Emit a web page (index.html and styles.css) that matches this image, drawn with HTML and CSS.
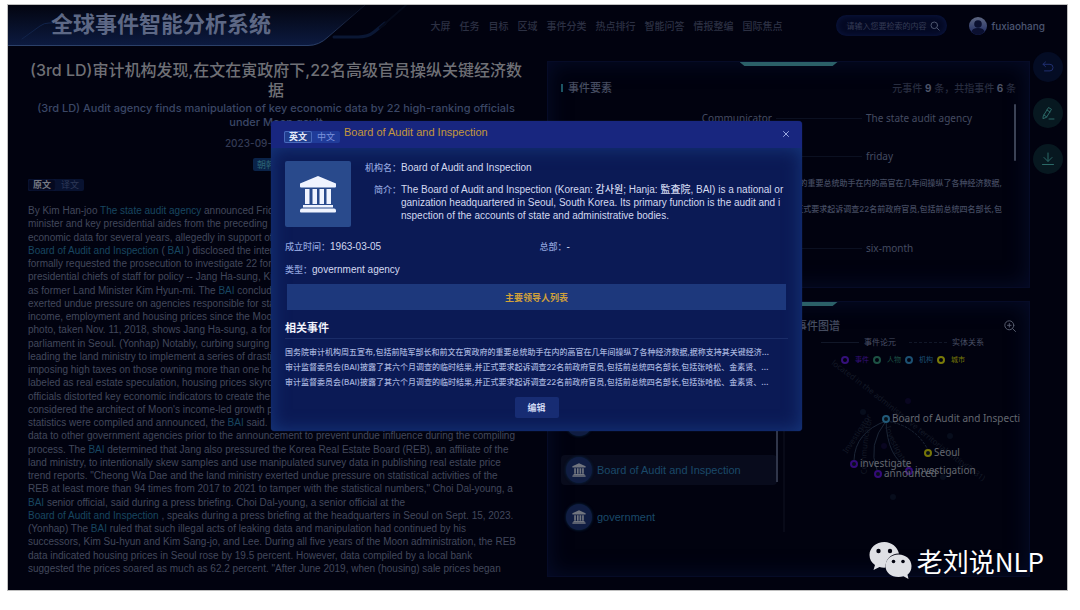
FILE: index.html
```html
<!DOCTYPE html>
<html lang="zh-CN">
<head>
<meta charset="utf-8">
<title>全球事件智能分析系统</title>
<link rel="stylesheet" href="styles.css">
</head>
<body>
<svg class="defs" width="0" height="0" aria-hidden="true">
  <symbol id="bank" viewBox="0 0 38 38">
    <path d="M19 1 37 8.500v3q0 1-1 1H2q-1 0-1-1v-3ZM6 14h4.500v15H6Zm7.500 0H18v15h-4.500Zm7 0H25v15h-4.500Zm7 0H32v15h-4.500ZM4 30h30v2.500H4ZM3 33.500h32q2 0 2 2v1q0 1-1 1H2q-1 0-1-1v-1q0-2 2-2Z"/>
  </symbol>
</svg>
<div class="screen">
  <header class="topbar">
    <svg class="banner" width="400" height="42" viewBox="0 0 400 42" aria-hidden="true">
      <defs>
        <linearGradient id="bannerFill" x1="0" y1="0" x2="0" y2="1">
          <stop offset="0" stop-color="#030510"/><stop offset="1" stop-color="#0c1a40"/>
        </linearGradient>
        <linearGradient id="bannerEdge" x1="0" y1="0" x2="0" y2="1">
          <stop offset="0" stop-color="#0a1024"/><stop offset="1" stop-color="#2b4069"/>
        </linearGradient>
      </defs>
      <path d="M0 0H356L320 32Q311 40.500 300 40.500H0Z" fill="url(#bannerFill)"/>
      <path d="M357 0 320 32Q311 40.500 300 40.500H0" fill="none" stroke="url(#bannerEdge)"/>
      <path d="M326 32H350Q360 32 366 27L377 18" fill="none" stroke="#0a1734" stroke-width="3"/>
      <path d="M372 23 398 0" fill="none" stroke="#050a1a" stroke-width="2"/>
      <path d="M14 34 32 21Q36 18 41 18H62" fill="none" stroke="#11234a" stroke-width="1"/>
    </svg>
    <h1 class="brand">全球事件智能分析系统</h1>
    <nav class="nav">
      <a href="#">大屏</a><a href="#">任务</a><a href="#">目标</a><a href="#">区域</a><a href="#">事件分类</a><a href="#">热点排行</a><a href="#">智能问答</a><a href="#">情报整编</a><a href="#">国际焦点</a>
    </nav>
    <form class="search">
      <input type="text" aria-label="搜索" placeholder="请输入您要检索的内容">
      <button type="button" aria-label="检索"><svg width="10" height="10" viewBox="0 0 10 10"><circle cx="4.300" cy="4.300" r="3.300"/><path d="m6.800 6.800 2.400 2.400"/></svg></button>
    </form>
    <div class="user">
      <svg width="18" height="18" viewBox="0 0 18 18" aria-hidden="true"><defs><linearGradient id="av" x1="0" y1="0" x2="0" y2="1"><stop offset="0" stop-color="#5d6680"/><stop offset="1" stop-color="#1c2862"/></linearGradient></defs><circle cx="9" cy="9" r="9" fill="url(#av)"/><circle cx="9" cy="7" r="3.800" fill="#0b1030"/><path d="M2.500 15Q3 11 9 11t6.500 4Q12 18 9 18t-6.500-3Z" fill="#0b1030"/></svg>
      <span>fuxiaohang</span>
    </div>
  </header>

  <main class="main">
    <article class="article">
      <h2 class="headline">(3rd LD)审计机构发现,在文在寅政府下,22名高级官员操纵关键经济数<br>据</h2>
      <p class="subhead">(3rd LD) Audit agency finds manipulation of key economic data by 22 high-ranking officials<br>under Moon gov't</p>
      <p class="date">2023-09-15 15:30:00</p>
      <div class="tags"><span class="tag">朝韩</span></div>
      <div class="switch"><button type="button" class="on">原文</button><button type="button">译文</button></div>
      <div class="story">
        <span>By Kim Han-joo <a href="#">The state audit agency</a> announced Friday</span>
        <span>minister and key presidential aides from the preceding</span>
        <span>economic data for several years, allegedly in support of</span>
        <span><a href="#">Board of Audit and Inspection</a> ( <a href="#">BAI</a> ) disclosed the interim</span>
        <span>formally requested the prosecution to investigate 22 former</span>
        <span>presidential chiefs of staff for policy -- Jang Ha-sung, Kim</span>
        <span>as former Land Minister Kim Hyun-mi. The <a href="#">BAI</a> concluded</span>
        <span>exerted undue pressure on agencies responsible for state</span>
        <span>income, employment and housing prices since the Moon</span>
        <span>photo, taken Nov. 11, 2018, shows Jang Ha-sung, a former</span>
        <span>parliament in Seoul. (Yonhap) Notably, curbing surging</span>
        <span>leading the land ministry to implement a series of drastic</span>
        <span>imposing high taxes on those owning more than one home</span>
        <span>labeled as real estate speculation, housing prices skyrocketed</span>
        <span>officials distorted key economic indicators to create the</span>
        <span>considered the architect of Moon's income-led growth policy</span>
        <span>statistics were compiled and announced, the <a href="#">BAI</a> said.</span>
        <span>data to other government agencies prior to the announcement to prevent undue influence during the compiling</span>
        <span>process. The <a href="#">BAI</a> determined that Jang also pressured the Korea Real Estate Board (REB), an affiliate of the</span>
        <span>land ministry, to intentionally skew samples and use manipulated survey data in publishing real estate price</span>
        <span>trend reports. "Cheong Wa Dae and the land ministry exerted undue pressure on statistical activities of the</span>
        <span>REB at least more than 94 times from 2017 to 2021 to tamper with the statistical numbers," Choi Dal-young, a</span>
        <span><a href="#">BAI</a> senior official, said during a press briefing. Choi Dal-young, a senior official at the</span>
        <span><a href="#">Board of Audit and Inspection</a> , speaks during a press briefing at the headquarters in Seoul on Sept. 15, 2023.</span>
        <span>(Yonhap) The <a href="#">BAI</a> ruled that such illegal acts of leaking data and manipulation had continued by his</span>
        <span>successors, Kim Su-hyun and Kim Sang-jo, and Lee. During all five years of the Moon administration, the REB</span>
        <span>data indicated housing prices in Seoul rose by 19.5 percent. However, data compiled by a local bank</span>
        <span>suggested the prices soared as much as 62.2 percent. "After June 2019, when (housing) sale prices began</span>
      </div>
    </article>

    <div class="side">
      <section class="panel facts">
        <div class="panel-head"><h3>事件要素</h3><p>元事件 <b>9</b> 条，共指事件 <b>6</b> 条</p></div>
        <div class="facts-body">
          <div class="fact"><span>Communicator</span><i></i><span>The state audit agency</span></div>
          <div class="fact"><span></span><i></i><span>friday</span></div>
          <p>国务院审计机构周五宣布,包括前陆军部长和前文在寅政府的重要总统助手在内的高官在几年间操纵了各种经济数据,</p>
          <p>审计监督委员会(BAI)披露了其六个月调查的临时结果,并正式要求起诉调查22名前政府官员,包括前总统四名部长,包</p>
          <div class="fact"><span></span><i></i><span>six-month</span></div>
        </div>
      </section>

      <section class="panel lower">
        <div class="entities">
          <ul>
            <li><span class="ico"><svg width="14" height="14"><use href="#bank"/></svg></span>BAI</li>
            <li class="sel"><span class="ico"><svg width="14" height="14"><use href="#bank"/></svg></span>Board of Audit and Inspection</li>
            <li><span class="ico"><svg width="14" height="14"><use href="#bank"/></svg></span>government</li>
          </ul>
        </div>
        <div class="graph">
          <div class="graph-head"><h3>事件图谱</h3>
            <button type="button" aria-label="放大"><svg width="12" height="12" viewBox="0 0 12 12"><circle cx="5.300" cy="5.300" r="4.500"/><path d="m8.500 8.500 3 3M5.300 3.500v3.600M3.500 5.300h3.600"/></svg></button>
          </div>
          <div class="edges-key"><i></i><span>事件论元</span><i></i><span>实体关系</span></div>
          <div class="nodes-key"><span class="k1">事件</span><span class="k2">人物</span><span class="k3">机构</span><span class="k4">城市</span></div>
          <svg class="net" width="220" height="190" viewBox="0 0 220 190">
            <g fill="none" stroke="#1b2536">
              <path d="M81 51Q50 62 49 90"/><path d="M81 51Q62 75 72 100"/><path d="M81 51Q82 88 104 98"/>
              <path d="M81 51Q110 55 123 80" stroke-dasharray="2 2"/>
            </g>
            <path id="t1" d="M42 84Q56 63 74 35" fill="none"/><path id="t2" d="M62 104Q59 75 71 34" fill="none"/><path id="t3" d="M80 57Q88 82 108 108" fill="none"/><path id="t4" d="M26 -6Q64 22 112 61T216 138" fill="none"/>
            <g class="edge-label">
              <text><textPath href="#t1">Investigator</textPath></text><text><textPath href="#t2">Communicator</textPath></text><text><textPath href="#t3">Investigator</textPath></text><text><textPath href="#t4">located in the administrative territorial entity(P131)</textPath></text>
            </g>
            <g fill="#070d1c"><circle cx="58" cy="42" r="3"/><circle cx="103" cy="31" r="3" fill="#090620"/><circle cx="145" cy="66" r="3"/><circle cx="138" cy="107" r="3"/><circle cx="88" cy="127" r="3"/><circle cx="79" cy="76" r="3" fill="#090620"/></g>
            <g fill="#081018" stroke-width="2">
              <circle cx="81" cy="49" r="3" stroke="#225a7a"/><circle cx="123" cy="83" r="3" stroke="#777608"/><circle cx="49" cy="94" r="3" stroke="#340b78"/><circle cx="73" cy="104" r="3" stroke="#340b78"/><circle cx="104" cy="101" r="3" stroke="#340b78"/>
            </g>
            <g class="node-label"><text x="87" y="52">Board of Audit and Inspecti</text><text x="129" y="86">Seoul</text><text x="55" y="97">investigate</text><text x="79" y="107">announced</text><text x="110" y="104">investigation</text></g>
          </svg>
        </div>
      </section>
    </div>

    <aside class="tools">
      <button type="button" class="back" aria-label="返回"><svg width="14" height="14" viewBox="0 0 14 14"><path d="M4.500 2 2 4.300l2.500 2.300M2 4.300h7q3 0 3 3.300t-3 3.300H3.500"/></svg></button>
      <button type="button" aria-label="编辑"><svg width="14" height="14" viewBox="0 0 14 14"><path d="M2.500 9.500 7.500 1.500 10.500 3.300 5.500 11.300 2.300 12.500ZM6 4 9 6M3 9 5.800 11M8 13h5"/></svg></button>
      <button type="button" aria-label="下载"><svg width="14" height="14" viewBox="0 0 14 14"><path d="M7 1v8M3 5.500 7 9.500l4-4M1.500 12.500h11"/></svg></button>
    </aside>
  </main>

  <dialog class="modal" open aria-labelledby="modalTitle">
    <header class="modal-head">
      <div class="switch bright"><button type="button" class="on">英文</button><button type="button">中文</button></div>
      <h2 id="modalTitle">Board of Audit and Inspection</h2>
      <button type="button" class="close" aria-label="关闭"><svg width="6" height="6" viewBox="0 0 6 6"><path d="m.5.5 5 5m0-5-5 5"/></svg></button>
    </header>
    <div class="modal-body">
      <div class="profile">
        <div class="logo"><svg width="38" height="38"><use href="#bank"/></svg></div>
        <dl>
          <dt>机构名：</dt><dd>Board of Audit and Inspection</dd>
          <dt>简介：</dt><dd>The Board of Audit and Inspection (Korean: 감사원; Hanja: 監査院, BAI) is a national or<br>ganization headquartered in Seoul, South Korea. Its primary function is the audit and i<br>nspection of the accounts of state and administrative bodies.</dd>
        </dl>
      </div>
      <div class="meta">
        <p><span>成立时间：</span>1963-03-05</p><p><span>总部：</span>-</p>
        <p><span>类型：</span>government agency</p>
      </div>
      <button type="button" class="leaders">主要领导人列表</button>
      <h3>相关事件</h3>
      <ul class="events">
        <li>国务院审计机构周五宣布,包括前陆军部长和前文在寅政府的重要总统助手在内的高官在几年间操纵了各种经济数据,据称支持其关键经济…</li>
        <li>审计监督委员会(BAI)披露了其六个月调查的临时结果,并正式要求起诉调查22名前政府官员,包括前总统四名部长,包括张哈松、金素贤、…</li>
        <li>审计监督委员会(BAI)披露了其六个月调查的临时结果,并正式要求起诉调查22名前政府官员,包括前总统四名部长,包括张哈松、金素贤、…</li>
      </ul>
      <button type="button" class="edit">编辑</button>
    </div>
  </dialog>

  <div class="watermark">
    <svg width="43" height="37" viewBox="0 0 43 37" aria-hidden="true">
      <path d="M15.500 0C7 0 .5 5.700.5 13c0 4.200 2 7.700 5.500 10L4.500 28l6-3q2.500.8 6 .6A13 13 0 0 1 30 11.500C28.500 5 22.500 0 15.500 0Z"/>
      <path d="M29.500 12.500C22 12.500 16.500 17.600 16.500 24S22 35 29.500 35q2.500 0 5-.7L39.500 37l-1-4.300Q42.500 29.500 42.500 24C42.500 17.600 37 12.500 29.500 12.500Z"/>
      <g fill="#02030f"><circle cx="9.500" cy="9" r="2.200"/><circle cx="21" cy="9" r="2.200"/><circle cx="24.500" cy="19.500" r="1.800"/><circle cx="34" cy="19.500" r="1.800"/></g>
    </svg>
    <span>老刘说NLP</span>
  </div>
</div>
</body>
</html>
```

FILE: styles.css
```css
*, *::before, *::after { box-sizing: border-box; }
body {
  margin: 0;
  padding: 5px 13px 20px 8px;
  background: #fff;
  font-family: Inter, "Noto Sans CJK SC", "Noto Sans CJK KR", sans-serif;
  font-size: 9px;
}
h1, h2, h3, p, ul, dl, dd { margin: 0; padding: 0; font-weight: 500; }
ul { list-style: none; }
a { color: inherit; text-decoration: none; }
button { font: inherit; color: inherit; background: none; border: 0; padding: 0; cursor: pointer; }
svg { display: block; fill: none; stroke-linecap: round; stroke-linejoin: round; }
.defs { position: absolute; }

.screen {
  position: relative;
  display: flex;
  flex-direction: column;
  min-height: calc(100vh - 25px);
  overflow: hidden;
  background: #01020f;
  box-shadow: 0 0 0 1px #8888;
}

/* Top bar */
.topbar { position: relative; display: flex; align-items: center; height: 41px; padding: 0 22px 0 43px; }
.banner { position: absolute; left: 0; top: 0; }
.brand {
  position: relative;
  flex: 1;
  color: #5d6885;
  font-size: 22px;
  line-height: 36px;
  font-weight: 700;
  padding-bottom: 4px;
  white-space: nowrap;
}
.nav { display: flex; gap: 9px; margin-right: 54px; color: #2c3043; font-size: 10px; font-weight: 500; white-space: nowrap; }
.search { display: flex; align-items: center; width: 111px; height: 21px; padding: 0 7px 0 10px; margin-right: 22px; border-radius: 11px; background: #040924; box-shadow: inset 0 0 6px #0c1844; }
.search input { flex: 1; min-width: 0; padding: 0; border: 0; background: none; font: inherit; font-size: 8px; color: #4a5270; }
.search input::placeholder { color: #353b55; }
.search svg { stroke: #4d566f; }
.user { display: flex; align-items: center; gap: 4px; color: #4c5672; font-size: 10px; font-weight: 500; }

/* Page columns */
.main {
  flex: 1;
  display: grid;
  grid-template-columns: minmax(0, 516fr) minmax(0, 483fr) 30px;
  column-gap: 3px;
  padding: 6px 4px 13px 20px;
}
.article { display: flex; flex-direction: column; margin-right: 20px; white-space: nowrap; }
.headline { margin-top: 8px; color: #6f7076; font-size: 16px; line-height: 20px; text-align: center; }
.subhead { color: #3b4766; font-size: 11px; line-height: 14px; margin-top: 1px; text-align: center; }
.date { margin-top: 8px; color: #343b55; font-size: 10px; line-height: 13px; text-align: center; }
.tags { display: flex; justify-content: center; margin-top: 8px; }
.tag { width: 46px; padding-left: 4px; line-height: 13px; border-radius: 2px; background: #0a2349; color: #2b6475; }
.switch { display: flex; align-self: flex-start; border-radius: 2px; background: #081230; color: #2e3958; line-height: 12px; }
.switch button { width: 28px; }
.switch .on { border-radius: 2px; background: #05091f; color: #767983; box-shadow: inset 0 0 2px #16295c; font-weight: 700; }
.article .switch { margin-top: 8px; }
.story {
  flex: 1;
  display: flex;
  flex-direction: column;
  justify-content: space-between;
  margin-top: 13px;
  padding-bottom: 2px;
  color: #41485c;
  font-family: "Liberation Sans", sans-serif;
  font-size: 10px;
  line-height: 13px;
}
.story a { color: #184660; }

.side { display: flex; flex-direction: column; gap: 13px; padding-top: 9px; min-width: 0; }
.panel { position: relative; border: 1px solid #060b27; background: #01020f; box-shadow: inset 0 0 22px #060d2b; }
.panel::before {
  content: "";
  position: absolute;
  left: 50%;
  top: 0;
  width: 98px;
  height: 4px;
  margin-left: -49px;
  background: #2b6068;
  clip-path: polygon(0 0, 100% 0, 95% 100%, 5% 100%);
}
.panel h3 { color: #454c60; font-size: 11px; line-height: 16px; }
.facts { height: 227px; padding: 18px 13px 0; }
.panel-head { display: flex; justify-content: space-between; color: #272c3f; font-size: 10px; line-height: 16px; }
.panel-head h3 { display: flex; align-items: center; gap: 5px; }
.panel-head h3::before { content: ""; width: 2px; height: 8px; background: #1c5564; }
.panel-head b { color: #4c5368; }
.facts-body { position: relative; height: 160px; margin-top: 8px; padding: 7px 14px 0 0; color: #444b61; }
.facts-body::after { content: ""; position: absolute; right: 0; top: 0; width: 2px; height: 57px; border-radius: 1px; background: #3b4256; }
.facts-body p { display: flex; justify-content: flex-end; line-height: 12px; margin-bottom: 14px; font-size: 8px; white-space: nowrap; overflow: hidden; }
.fact { display: grid; grid-template-columns: 211px 86px 1fr; align-items: center; column-gap: 4px; height: 13px; margin-bottom: 25px; font-family: "Noto Sans", sans-serif; font-size: 10px; white-space: nowrap; }
.fact + p { margin-top: -10px; }
.facts-body p + .fact { margin-top: 26px; }
.fact span:first-child { text-align: right; }
.fact i { height: 1px; background: #0b1021; }

.lower { flex: 1; display: grid; grid-template-columns: 237px minmax(0, 1fr); }
.entities { padding: 106px 0 42px 13px; }
.entities ul { border-right: 2px solid #080a18; position: relative; }
.entities ul::after { content: ""; position: absolute; right: 5px; top: 0; width: 2px; height: 74px; background: #30364a; }
.entities li { display: flex; align-items: center; gap: 5px; height: 30px; margin: 0 6px 17px 0; padding-left: 5px; border-radius: 4px; color: #1a4969; font-family: "Liberation Sans", sans-serif; font-size: 11px; }
.entities li:last-child { margin-bottom: 0; }
.entities .sel { background: #080b1c; }
.ico { display: grid; place-items: center; width: 26px; height: 26px; border-radius: 50%; background: #101d42; box-shadow: 0 0 3px #0c2b4b; }
.ico svg { fill: #71757f; }
.graph { padding: 16px 13px 0 11px; min-width: 0; }
.graph-head { display: flex; justify-content: space-between; align-items: flex-start; }
.graph-head svg { stroke: #565c6e; margin-top: 2px; }
.edges-key { display: flex; align-items: center; justify-content: flex-end; gap: 5px; padding-right: 32px; margin-top: 2px; color: #484f64; font-size: 8px; line-height: 12px; }
.edges-key i { width: 38px; border-top: 1px solid #111728; }
.edges-key i:nth-of-type(2) { border-top-style: dashed; margin-left: 8px; }
.nodes-key { display: flex; gap: 4px; margin: 6px 0 0 45px; font-size: 7px; line-height: 12px; }
.nodes-key span { display: flex; align-items: center; gap: 6px; white-space: nowrap; }
.nodes-key span::before { content: ""; width: 8px; height: 8px; border: 2px solid; border-radius: 50%; }
.k1 { color: #35107a; }
.k2 { color: #1d5244; }
.k3 { color: #1c5072; }
.k4 { color: #797a08; }
.net { margin: 4px 0 -30px 9px; max-width: none; overflow: visible; font-family: "Noto Sans", sans-serif; }
.edge-label { fill: #131926; font-size: 8px; }
.node-label { fill: #63676f; font-size: 10px; }

.tools { display: flex; flex-direction: column; gap: 16px; }
.tools button { display: grid; place-items: center; width: 30px; height: 30px; border-radius: 50%; background: #071820; }
.tools svg { stroke: #2b6967; }
.tools .back { background: #040c24; }
.tools .back svg { stroke: #202f70; }

/* Entity card */
.modal {
  position: absolute;
  top: 116px;
  left: 0;
  right: 2px;
  width: 531px;
  max-width: 100%;
  margin: 0 auto;
  padding: 0;
  border: 0;
  border-radius: 4px;
  overflow: hidden;
  background: #0b1a55;
  color: #d3d9f0;
  box-shadow: 0 0 1px #2a4a9a;
}
.modal-head { display: flex; align-items: flex-start; gap: 4px; height: 27px; padding: 5px 13px 0; background: #18267f; color: #c4973c; }
.modal-head h2 { flex: 1; font-family: "Liberation Sans", sans-serif; font-size: 11px; line-height: 13px; }
.bright { margin-top: 5px; background: #203b99; color: #7c92dc; }
.bright .on { background: #203d8e; color: #e6eaf8; box-shadow: inset 0 0 0 1px #4869bd; }
.close { margin-top: 5px; }
.close svg { stroke: #9aa8e0; }
.modal-body { display: flex; flex-direction: column; padding: 13px 14px; box-shadow: inset 0 0 18px #17387e; }
.profile { display: flex; gap: 11px; }
.logo { display: grid; place-items: center; width: 66px; height: 66px; border-radius: 2px; background: #294a8c; }
.logo svg { fill: #f0f4ff; }
.profile dl { flex: 1; display: grid; grid-template-columns: 39px 1fr; align-content: start; row-gap: 9px; line-height: 13px; white-space: nowrap; }
.profile dt { display: flex; justify-content: flex-end; color: #8fa2dc; }
.profile dd, .meta { font-family: "Liberation Sans", "Noto Sans CJK SC", "Noto Sans CJK KR", sans-serif; font-size: 10px; }
.meta { display: grid; grid-template-columns: 1fr 1fr; column-gap: 6px; row-gap: 9px; margin-top: 13px; line-height: 13px; }
.meta span { color: #8fa2dc; font-size: 9px; }
.leaders { height: 26px; margin: 7px 2px 0; background: #1d387c; color: #d2a13a; font-weight: 700; }
.modal-body h3 { margin-top: 10px; padding-bottom: 1px; border-bottom: 1px solid #1a2c68; color: #f2f4fc; font-size: 11px; line-height: 17px; font-weight: 700; }
.events { margin-top: 6px; color: #a5b2dd; font-size: 8px; }
.events li { line-height: 15px; white-space: nowrap; overflow: hidden; text-overflow: ellipsis; }
.edit { align-self: center; width: 44px; height: 21px; margin-top: 7px; border-radius: 2px; background: #172c73; color: #d0d8f2; font-weight: 700; }

.watermark { position: absolute; right: 23px; bottom: 11px; display: flex; align-items: center; gap: 5px; color: #fff; font-family: "Noto Sans CJK SC", sans-serif; font-size: 26px; line-height: 36px; }
.watermark svg { fill: #dfe0e5; }
```
